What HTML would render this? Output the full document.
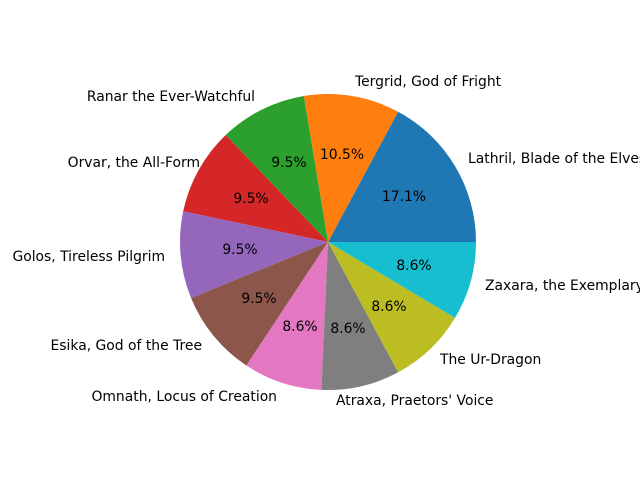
<!DOCTYPE html>
<html><head><meta charset="utf-8"><style>html,body{margin:0;padding:0;background:#fff;overflow:hidden}svg{display:block}text{font-family:"DejaVu Sans","Liberation Sans",sans-serif;font-size:13.9px;fill:#000;dominant-baseline:central}</style></head>
<body><svg width="640" height="480" viewBox="0 0 640 480">
<g>
<path d="M328 242 L476 242 A148 148 0 0 0 398.1 111.7 Z" fill="#1f77b4"/>
<path d="M328 242 L398.1 111.7 A148 148 0 0 0 303.8 96 Z" fill="#ff7f0e"/>
<path d="M328 242 L303.8 96 A148 148 0 0 0 225.7 135 Z" fill="#2ca02c"/>
<path d="M328 242 L225.7 135 A148 148 0 0 0 183.2 211.2 Z" fill="#d62728"/>
<path d="M328 242 L183.2 211.2 A148 148 0 0 0 191.1 298.1 Z" fill="#9467bd"/>
<path d="M328 242 L191.1 298.1 A148 148 0 0 0 246.4 365.5 Z" fill="#8c564b"/>
<path d="M328 242 L246.4 365.5 A148 148 0 0 0 321.4 389.9 Z" fill="#e377c2"/>
<path d="M328 242 L321.4 389.9 A148 148 0 0 0 398.2 372.3 Z" fill="#7f7f7f"/>
<path d="M328 242 L398.2 372.3 A148 148 0 0 0 455 317.9 Z" fill="#bcbd22"/>
<path d="M328 242 L455 317.9 A148 148 0 0 0 476 242 Z" fill="#17becf"/>
</g>
<g text-anchor="middle">
<text x="404" y="197">17.1%</text>
<text x="342" y="155">10.5%</text>
<text x="289" y="163">9.5%</text>
<text x="251" y="199">9.5%</text>
<text x="240" y="250">9.5%</text>
<text x="259" y="299">9.5%</text>
<text x="300" y="327">8.6%</text>
<text x="348" y="329">8.6%</text>
<text x="389" y="307">8.6%</text>
<text x="414" y="266">8.6%</text>
</g>
<text x="468" y="159">Lathril, Blade of the Elves</text>
<text x="355" y="82">Tergrid, God of Fright</text>
<text x="485" y="286">Zaxara, the Exemplary</text>
<text x="440" y="360">The Ur-Dragon</text>
<text x="336" y="401">Atraxa, Praetors' Voice</text>
<g text-anchor="end">
<text x="255" y="97">Ranar the Ever-Watchful</text>
<text x="200" y="163">Orvar, the All-Form</text>
<text x="165" y="257">Golos, Tireless Pilgrim</text>
<text x="202" y="346">Esika, God of the Tree</text>
<text x="277" y="397">Omnath, Locus of Creation</text>
</g>
</svg></body></html>
